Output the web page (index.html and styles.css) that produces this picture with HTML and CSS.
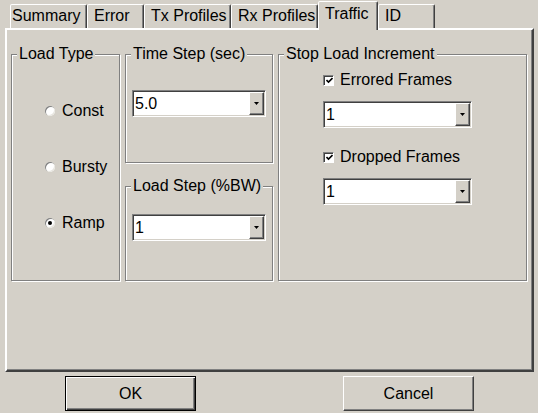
FILE: index.html
```html
<!DOCTYPE html>
<html>
<head>
<meta charset="utf-8">
<link rel="stylesheet" href="styles.css">
</head>
<body>
<div class="dialog">
  <div class="tabs">
    <div class="tab tab-summary">Summary</div>
    <div class="tab tab-error">Error</div>
    <div class="tab tab-tx">Tx Profiles</div>
    <div class="tab tab-rx">Rx Profiles</div>
    <div class="tab tab-traffic selected">Traffic</div>
    <div class="tab tab-id">ID</div>
  </div>
  <div class="panel">
    <div class="groups">
      <fieldset class="group load-type">
        <legend>Load Type</legend>
        <div class="body load-type-body">
          <div class="option"><span class="radio"></span><span>Const</span></div>
          <div class="option"><span class="radio"></span><span>Bursty</span></div>
          <div class="option"><span class="radio checked"></span><span>Ramp</span></div>
        </div>
      </fieldset>
      <div class="col-mid">
        <fieldset class="group time-step">
          <legend>Time Step (sec)</legend>
          <div class="body time-step-body">
            <div class="combo combo-narrow">
              <span class="combo-value">5.0</span>
              <span class="combo-btn"><svg width="5" height="3" viewBox="0 0 5 3"><polygon points="0,0 5,0 2.5,3" fill="#000"/></svg></span>
            </div>
          </div>
        </fieldset>
        <fieldset class="group load-step">
          <legend>Load Step (%BW)</legend>
          <div class="body load-step-body">
            <div class="combo combo-narrow">
              <span class="combo-value">1</span>
              <span class="combo-btn"><svg width="5" height="3" viewBox="0 0 5 3"><polygon points="0,0 5,0 2.5,3" fill="#000"/></svg></span>
            </div>
          </div>
        </fieldset>
      </div>
      <fieldset class="group stop-load">
        <legend>Stop Load Increment</legend>
        <div class="body stop-load-body">
          <div class="check-row">
            <span class="checkbox"><svg width="7" height="7" viewBox="0 0 7 7"><path d="M0.5 3 L2.5 5 L6.5 1" fill="none" stroke="#000" stroke-width="1.6"/></svg></span>
            <span>Errored Frames</span>
          </div>
          <div class="combo combo-wide first-combo">
            <span class="combo-value">1</span>
            <span class="combo-btn"><svg width="5" height="3" viewBox="0 0 5 3"><polygon points="0,0 5,0 2.5,3" fill="#000"/></svg></span>
          </div>
          <div class="check-row second-row">
            <span class="checkbox"><svg width="7" height="7" viewBox="0 0 7 7"><path d="M0.5 3 L2.5 5 L6.5 1" fill="none" stroke="#000" stroke-width="1.6"/></svg></span>
            <span>Dropped Frames</span>
          </div>
          <div class="combo combo-wide second-combo">
            <span class="combo-value">1</span>
            <span class="combo-btn"><svg width="5" height="3" viewBox="0 0 5 3"><polygon points="0,0 5,0 2.5,3" fill="#000"/></svg></span>
          </div>
        </div>
      </fieldset>
    </div>
  </div>
  <div class="buttons">
    <div class="btn btn-default">OK</div>
    <div class="btn">Cancel</div>
  </div>
</div>
</body>
</html>
```
FILE: styles.css
```css
* { box-sizing: border-box; }

html, body {
  margin: 0;
  background: #d4d0c8;
}

body {
  font-family: "Liberation Sans", Arial, sans-serif;
  font-size: 16px;
  line-height: 18px;
  color: #000;
}

.dialog {
  width: 538px;
  height: 413px;
  padding-left: 5px;
  overflow: hidden;
}

/* Tabs */
.tabs {
  display: flex;
  align-items: flex-end;
  height: 28px;
  padding-left: 5px;
}

.tab {
  height: 24px;
  border: 1px solid;
  border-bottom: none;
  border-color: #fff #404040 transparent #fff;
  box-shadow: inset -1px 0 0 #808080;
  border-radius: 2px 2px 0 0;
  padding: 2px 0 0 6px;
  white-space: nowrap;
  background: #d4d0c8;
}

.tab-summary { width: 77px; padding-left: 1px; }
.tab-error { width: 57px; }
.tab-tx { width: 87px; }
.tab-rx { width: 87px; }
.tab-traffic { width: 60px; }
.tab-id { width: 57px; }

.tab.selected {
  height: 29px;
  margin-bottom: -2px;
  padding-top: 3px;
  position: relative;
  z-index: 1;
}

/* Panel */
.panel {
  width: 529px;
  height: 344px;
  border: 2px solid;
  border-color: #fff #404040 #404040 #fff;
  box-shadow: inset -1px -1px 0 #808080;
  padding: 15px 0 0 4px;
}

.groups {
  display: grid;
  grid-template-columns: 109px 148px 249px;
  column-gap: 5px;
  height: 236px;
}

.group {
  margin: 0;
  padding: 0;
  min-width: 0;
  border: 1px solid #808080;
  box-shadow: 1px 1px 0 #fff, inset 1px 1px 0 #fff;
}

.group legend {
  margin-left: 5px;
  padding: 0 2px;
  background: #d4d0c8;
  line-height: 18px;
  white-space: nowrap;
}

.load-type { height: 236px; }

.load-type-body {
  display: flex;
  flex-direction: column;
  gap: 38px;
  padding: 39px 0 0 33px;
}

.option {
  display: flex;
  align-items: center;
  gap: 7px;
  height: 18px;
}

.radio {
  width: 10px;
  height: 10px;
  border-radius: 50%;
  background: #fff;
  box-shadow: inset 1px 1px 0 #808080, inset -1px -1px 0 #e8e6e0;
  display: flex;
  align-items: center;
  justify-content: center;
}

.radio.checked::after {
  content: "";
  width: 4px;
  height: 4px;
  border-radius: 50%;
  background: #000;
}

.col-mid {
  display: flex;
  flex-direction: column;
  gap: 14px;
  height: 236px;
}

.time-step { height: 118px; }
.time-step-body { padding: 27px 0 0 6px; }

.load-step { height: 104px; }
.load-step-body { padding: 19px 0 0 6px; }

/* Combo boxes */
.combo {
  display: flex;
  height: 27px;
  border: 1px solid;
  border-color: #808080 #fff #fff #808080;
  box-shadow: inset 1px 1px 0 #404040, inset -1px -1px 0 #d4d0c8;
  background: #fff;
  padding: 1px;
}

.combo-narrow { width: 134px; }
.combo-wide { width: 149px; }

.combo-value {
  flex: 1;
  line-height: 23px;
  padding-left: 1px;
}

.combo-btn {
  width: 15px;
  height: 23px;
  background: #d4d0c8;
  border: 1px solid;
  border-color: #fff #404040 #404040 #fff;
  box-shadow: inset -1px -1px 0 #808080;
  display: flex;
  align-items: center;
  justify-content: center;
}

.combo-btn svg { display: block; }

/* Stop load */
.stop-load { height: 236px; }
.stop-load-body { padding: 8px 0 0 44px; }

.check-row {
  display: flex;
  align-items: center;
  gap: 6px;
  height: 18px;
}

.checkbox {
  width: 11px;
  height: 11px;
  background: #fff;
  border: 1px solid;
  border-color: #808080 #fff #fff #808080;
  box-shadow: inset 1px 1px 0 #404040;
  display: flex;
  align-items: center;
  justify-content: center;
  padding: 1px 0 0 1px;
}

.checkbox svg { display: block; }

.first-combo { margin-top: 12px; }
.second-row { margin-top: 20px; }
.second-combo { margin-top: 12px; }

/* Buttons */
.buttons {
  display: flex;
  gap: 147px;
  padding-left: 60px;
  margin-top: 4px;
}

.btn {
  width: 131px;
  height: 35px;
  border: 1px solid;
  border-color: #fff #404040 #404040 #fff;
  box-shadow: inset -1px -1px 0 #808080;
  display: flex;
  align-items: center;
  justify-content: center;
}

.btn-default {
  border-color: #000;
  box-shadow: inset 1px 1px 0 #fff, inset -1px -1px 0 #404040, inset -2px -2px 0 #808080;
}
```
